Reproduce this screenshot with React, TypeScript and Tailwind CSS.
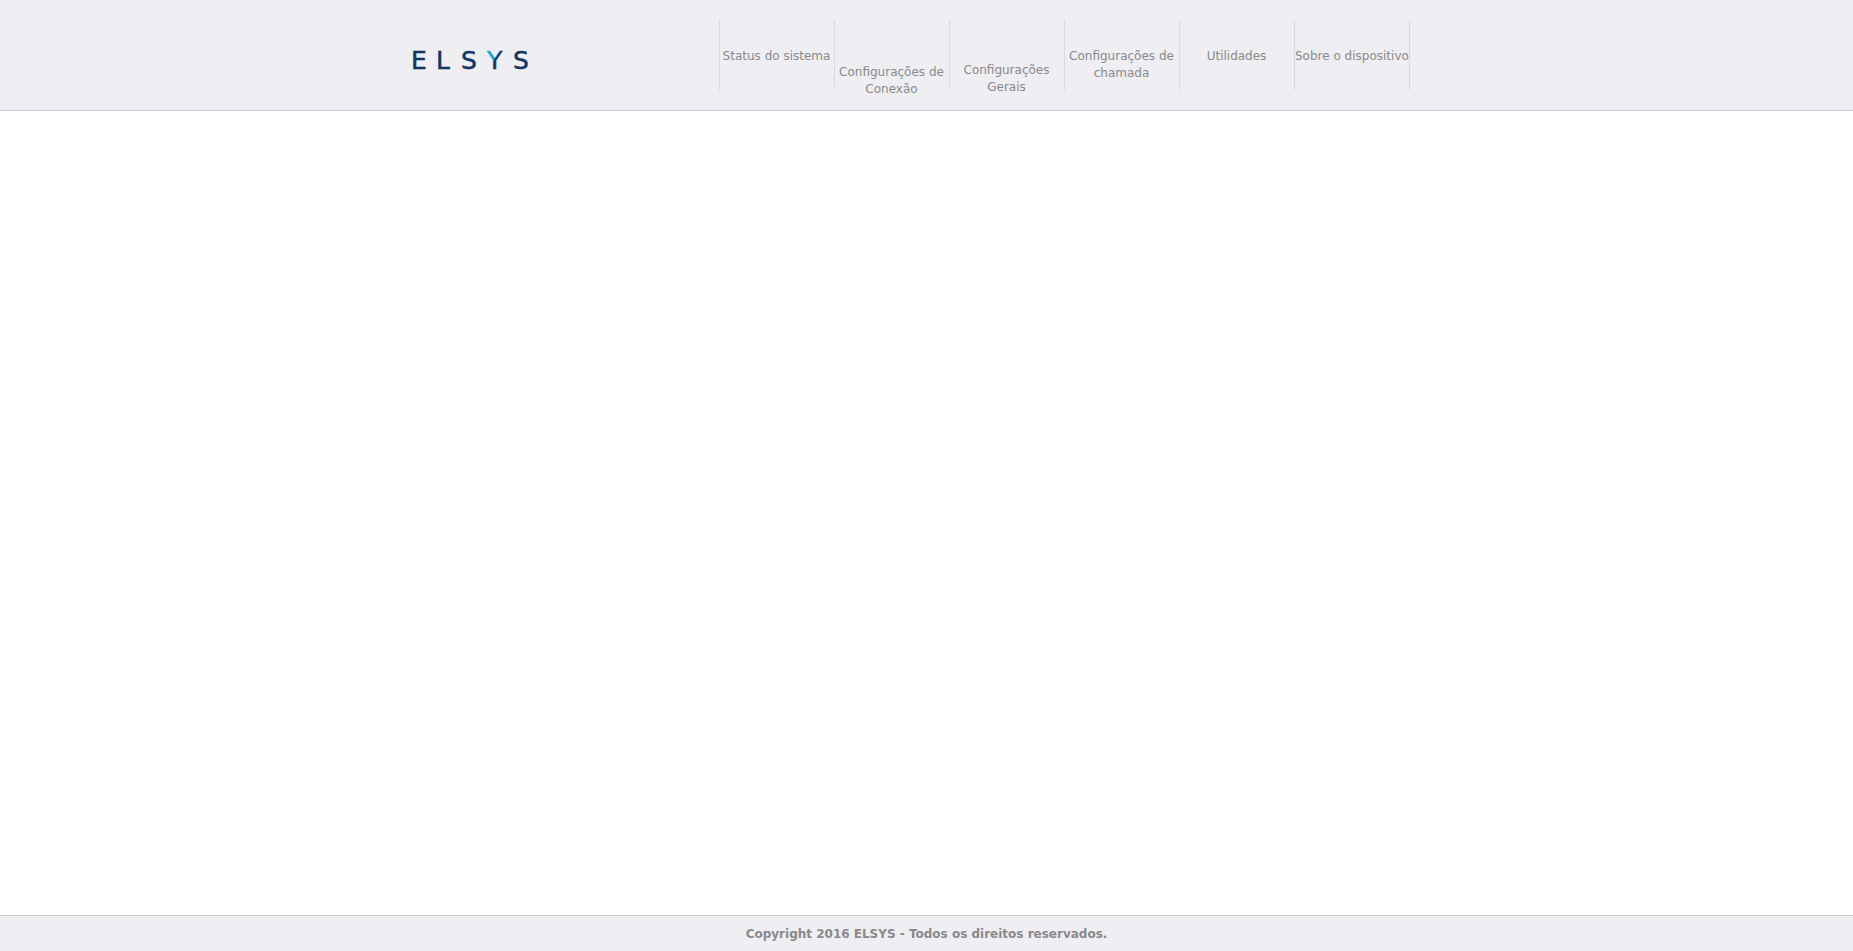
const menu = [
  { label: "Status do sistema", offset: "pt-7" },
  { label: "Configurações de Conexão", offset: "pt-11" },
  { label: "Configurações Gerais", offset: "pt-[42px]" },
  { label: "Configurações de chamada", offset: "pt-7" },
  { label: "Utilidades", offset: "pt-7" },
  { label: "Sobre o dispositivo", offset: "pt-7 whitespace-nowrap" },
];

function Logo() {
  return (
    <svg viewBox="0 0 120 30" className="h-[30px] w-[120px]" role="img" aria-label="ELSYS">
      <defs>
        <linearGradient id="arm" gradientUnits="userSpaceOnUse" x1="82" y1="14" x2="82.7" y2="14.5">
          <stop offset="0" stopColor="#1b9fdc" />
          <stop offset="1" stopColor="#12365d" />
        </linearGradient>
      </defs>
      <g fontFamily="DejaVu Sans, sans-serif" fontSize="25" fill="#12365d" stroke="#12365d" strokeWidth="0.5">
        <text x="-1" y="24">E</text>
        <text x="24" y="24">L</text>
        <text x="49" y="24">S</text>
        <text x="75" y="24" fill="url(#arm)" stroke="url(#arm)">Y</text>
        <text x="101" y="24">S</text>
      </g>
    </svg>
  );
}

export default function App() {
  return (
    <div className="flex min-h-screen flex-col bg-white font-['DejaVu_Sans',sans-serif] text-xs leading-[17px] text-[#8a8a8a]">
      <header className="border-b border-[#cccccc] bg-[#eeeef3]">
        <div className="mx-auto flex max-w-[1029px] items-start justify-between pt-5 pr-[31px] pb-5">
          <a href="#" className="mt-[25px] block">
            <Logo />
          </a>
          <nav className="border-r border-[#dadade]">
            <ul className="flex">
              {menu.map((item) => (
                <li key={item.label} className="h-[70px] w-[115px] border-l border-[#dadade]">
                  <a href="#" className={`block pr-px text-center ${item.offset}`}>
                    {item.label}
                  </a>
                </li>
              ))}
            </ul>
          </nav>
        </div>
      </header>
      <main className="grow" />
      <footer className="border-t border-[#cccccc] bg-[#eeeef3] pt-[10px] pb-2 text-center font-bold">
        Copyright 2016 ELSYS - Todos os direitos reservados.
      </footer>
    </div>
  );
}
